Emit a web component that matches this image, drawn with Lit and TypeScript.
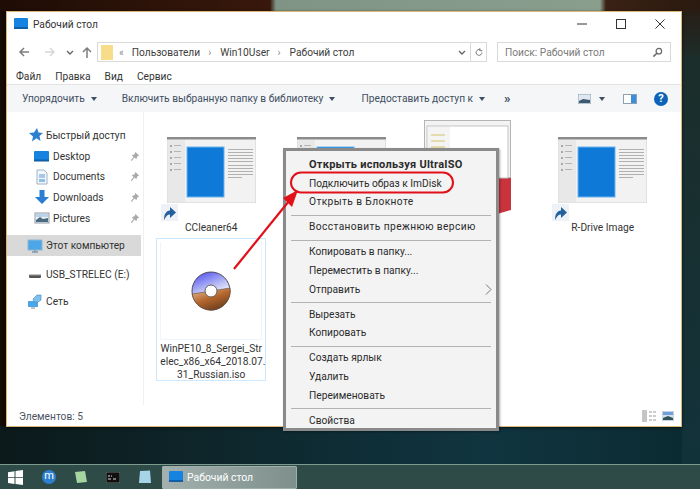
import { LitElement, html, svg, css } from 'lit';
import { customElement } from 'lit/decorators.js';

const chevron = svg`<path d="M1 1l3 3 3-3" fill="none" stroke="#666" stroke-width="1.4"/>`;

const navIcons = {
  star: svg`<path d="M10 1l1.500 4.500 4.500.4-3.500 3 1 5L9.500 11.300 5 14.500l1-5L2 6l5-.4z" fill="#2f7fd0"/>`,
  desktop: svg`<rect x="0" y="3" width="15" height="10" rx="1" fill="#1683e0"/><rect x="0" y="11.500" width="15" height="2" fill="#0f5fa8"/>`,
  docs: svg`<path d="M3 1h7l3 3v11H3z" fill="#f4f7fa" stroke="#9fb2c4"/><path d="M5 6h6M5 8h6" stroke="#5b9bd5"/><rect x="5" y="10" width="6" height="3" fill="#8fc0e8"/>`,
  down: svg`<path d="M5.500 1h5v7h4.500L8 15 1 8h4.500z" fill="#2b7cd3"/>`,
  pics: svg`<rect x="1" y="3" width="14" height="10" fill="#eef2f6" stroke="#8d9aa6"/><path d="M2 10l4-3 3 2 5-1v4H2z" fill="#4a6a80"/><rect x="2" y="4" width="12" height="3" fill="#b9d3ea"/>`,
  pc: svg`<rect x="1" y="2" width="14" height="10" fill="#4ca6e8" stroke="#8fb5cf"/><path d="M5 14h6M8 12v2" stroke="#7d99ad" stroke-width="1.500"/>`,
  usb: svg`<rect x="2" y="8" width="12" height="4" rx="1" fill="#555"/><rect x="2" y="8" width="12" height="1.300" fill="#c4c4c4"/>`,
  net: svg`<rect x="1" y="8" width="10" height="6" fill="#4ca6e8"/><path d="M6 6l4-4h4v5l-3 2H7z" fill="#7fc0ee" stroke="#3d87c0" stroke-width=".6"/><path d="M4 15h4" stroke="#888"/>`,
};

const navRows = [
  { icon: navIcons.star, label: 'Быстрый доступ', indent: 20 },
  { icon: navIcons.desktop, label: 'Desktop', indent: 27, pin: true },
  { icon: navIcons.docs, label: 'Documents', indent: 27, pin: true },
  { icon: navIcons.down, label: 'Downloads', indent: 27, pin: true },
  { icon: navIcons.pics, label: 'Pictures', indent: 27, pin: true },
  { icon: navIcons.pc, label: 'Этот компьютер', indent: 20, selected: true, gap: 7 },
  { icon: navIcons.usb, label: 'USB_STRELEC (E:)', indent: 20, gap: 8 },
  { icon: navIcons.net, label: 'Сеть', indent: 20, gap: 6 },
];

const menuGroups = [
  ['Открыть используя UltraISO', 'Подключить образ к ImDisk', 'Открыть в Блокноте'],
  ['Восстановить прежнюю версию'],
  ['Копировать в папку...', 'Переместить в папку...', 'Отправить'],
  ['Вырезать', 'Копировать'],
  ['Создать ярлык', 'Удалить', 'Переименовать'],
  ['Свойства'],
];

// these two lines run wider than the rest of the menu in the source
const wideItems = ['Открыть в Блокноте', 'Восстановить прежнюю версию'];

const thumb = svg`
  <rect width="89" height="66" fill="#f2f2f2" stroke="#d0d0d0"/>
  <rect width="89" height="2.500" fill="#8b8b8b"/>
  <rect x="1" y="3" width="17" height="62" fill="#e8e8e8"/>
  ${[8, 14, 20, 26, 32].map(y => svg`<rect x="3" y="${y}" width="2" height="2" fill="#a8a8a8"/><rect x="7" y="${y}" width="7" height="1" fill="#b5b5b5"/>`)}
  <rect x="20" y="10" width="37" height="50" fill="#0f79d8" stroke="#6db4ee"/>
  ${[12, 15, 18, 21, 24, 28, 31, 34, 37, 40].map((y, i) => svg`<rect x="61" y="${y}" width="${i === 9 ? 14 : 25}" height="1" fill="#b0b0b0"/>`)}
`;

const book = svg`
  <path d="M60 56h27v34l-14 4H60z" fill="#c8333c"/>
  <rect x=".5" y=".5" width="86" height="57" fill="#f3f3f3" stroke="#b5b5b5"/>
  <rect x="3" y="6" width="81" height="52" fill="#fff" stroke="#c4c4c4"/>
  <rect x="4" y="7" width="22" height="50" fill="#f4f4f4"/>
  ${[14, 20, 26, 32, 38].map(y => svg`<rect x="7" y="${y}" width="14" height="2" fill="#e3dcae"/>`)}
`;

const shortcut = svg`
  <rect width="17" height="17" fill="#eef1f5"/>
  <path d="M3 16c0-6 2-9 6-9.500V3l6 5.500-6 5.500v-3.500c-3 0-4 2-6 5.500z" fill="#245f9e"/>
`;

const disc = svg`
  <defs>
    <linearGradient id="top" x1="0.300" y1="0" x2="0.700" y2="1"><stop offset="0" stop-color="#5a5af0"/><stop offset=".4" stop-color="#b8bdf5"/><stop offset=".7" stop-color="#fff"/></linearGradient>
    <linearGradient id="bot" x1="0" y1="0" x2="0.600" y2="1"><stop offset="0" stop-color="#eec39a"/><stop offset=".55" stop-color="#b4672d"/><stop offset="1" stop-color="#71401f"/></linearGradient>
  </defs>
  <circle cx="20" cy="20" r="19" fill="url(#top)" stroke="#4d4a58"/>
  <path d="M1.200 23A19 19 0 0 0 39 17Z" fill="url(#bot)" stroke="#5e4a3c" stroke-width=".6"/>
  <circle cx="20" cy="20" r="6" fill="#fff" stroke="#66605a"/>
`;

const pin = svg`<path d="M7 1l4 4-2 1-1 3-2-2-3 4-1-1 3-3.500-2-2 3-1z" fill="#aaa"/>`;

@customElement('app-root')
export class AppRoot extends LitElement {
  private navRow(r: any) {
    return html`
      <div class="nav-row ${r.selected ? 'selected' : ''}" style="padding-left:${r.indent}px;margin-top:${r.gap ?? 0}px">
        <svg class="ico" viewBox="0 0 16 16" width="16" height="16">${r.icon}</svg>
        <span>${r.label}</span>
        ${r.pin ? html`<svg class="pin" viewBox="0 0 12 12" width="11" height="11">${pin}</svg>` : ''}
      </div>`;
  }

  private fileCell(label: string) {
    return html`
      <div class="cell">
        <div class="thumb">
          <svg viewBox="0 0 89 66" width="89" height="66">${thumb}</svg>
          <svg class="shortcut" viewBox="0 0 17 17" width="17" height="17">${shortcut}</svg>
        </div>
        <div class="label">${label}</div>
      </div>`;
  }

  render() {
    return html`
      <div class="window">
        <div class="title">
          <svg viewBox="0 0 14 12" width="14" height="12">
            <rect width="14" height="11" rx="1" fill="#1683e0"/><rect y="9" width="14" height="2" fill="#0f5fa8"/>
          </svg>
          <span class="title-text">Рабочий стол</span>
          <div class="controls">
            <svg viewBox="0 0 10 10" width="10" height="10"><path d="M0 5h10" stroke="#333"/></svg>
            <svg viewBox="0 0 10 10" width="10" height="10"><rect x=".5" y=".5" width="9" height="9" fill="none" stroke="#333"/></svg>
            <svg viewBox="0 0 10 10" width="10" height="10"><path d="M.5.500l9 9M9.500.500l-9 9" stroke="#333"/></svg>
          </div>
        </div>

        <div class="nav">
          <svg class="back" viewBox="0 0 12 12" width="12" height="12"><path d="M11 6H2M6 2L2 6l4 4" fill="none" stroke="#7d7d7d" stroke-width="1.500"/></svg>
          <svg class="fwd" viewBox="0 0 12 12" width="12" height="12"><path d="M1 6h9M6 2l4 4-4 4" fill="none" stroke="#d8d8d8" stroke-width="1.500"/></svg>
          <svg class="recent" viewBox="0 0 8 5" width="8" height="5">${chevron}</svg>
          <svg class="up" viewBox="0 0 12 12" width="12" height="12"><path d="M6 12V2M2 6l4-4 4 4" fill="none" stroke="#7d7d7d" stroke-width="1.500"/></svg>
          <div class="address">
            <svg class="folder" viewBox="0 0 12 15" width="12" height="15"><rect width="12" height="15" fill="#f8dc8a"/></svg>
            <span class="crumb-sep first">«</span>
            <span>Пользователи</span><span class="crumb-sep">›</span>
            <span>Win10User</span><span class="crumb-sep">›</span>
            <span>Рабочий стол</span>
            <svg class="addr-chev" viewBox="0 0 8 5" width="8" height="5">${chevron}</svg>
            <div class="refresh">
              <svg viewBox="0 0 12 12" width="10" height="11"><path d="M9.500 6a3.500 3.500 0 1 1-2-3.200M7 .800v3h3" fill="none" stroke="#777" stroke-width="1.200"/></svg>
            </div>
          </div>
          <div class="search">
            <span>Поиск: Рабочий стол</span>
            <svg viewBox="0 0 12 12" width="11" height="11"><circle cx="7.500" cy="4.500" r="3" fill="none" stroke="#666" stroke-width="1.300"/><path d="M5 7l-3.500 3.500" stroke="#666" stroke-width="1.600"/></svg>
          </div>
        </div>

        <div class="menubar"><span>Файл</span><span>Правка</span><span>Вид</span><span>Сервис</span></div>

        <div class="toolbar">
          <span class="tb a">Упорядочить<i class="caret"></i></span>
          <span class="tb b">Включить выбранную папку в библиотеку<i class="caret"></i></span>
          <span class="tb c">Предоставить доступ к<i class="caret"></i></span>
          <span class="more">»</span>
          <svg class="view" viewBox="0 0 13 10" width="13" height="10"><rect width="13" height="10" fill="#dfe8f0" stroke="#8ba0b3"/><path d="M1 7l4-2 7 1v3H1z" fill="#3f5a6e"/></svg>
          <i class="caret dark"></i>
          <svg class="pane" viewBox="0 0 14 10" width="14" height="10"><rect x=".5" y=".5" width="13" height="9" fill="#fff" stroke="#8ba0b3"/><rect x="8" y="1" width="5" height="8" fill="#3d8ed8"/></svg>
          <span class="help">?</span>
        </div>

        <div class="body">
          <div class="sidebar">${navRows.map(r => this.navRow(r))}</div>
          <div class="files">
            ${this.fileCell('CCleaner64')}
            ${this.fileCell('')}
            <div class="cell raised">
              <div class="thumb"><svg class="book" viewBox="0 0 87 94" width="87" height="94">${book}</svg></div>
            </div>
            ${this.fileCell('R-Drive Image')}
            <div class="iso">
              <div class="iso-pic"><svg viewBox="0 0 40 40" width="40" height="40">${disc}</svg></div>
              <div class="iso-name">WinPE10_8_Sergei_Str<br>elec_x86_x64_2018.07.<br>31_Russian.iso</div>
            </div>
          </div>
        </div>

        <div class="status">
          <span>Элементов: 5</span>
          <svg class="st-list" viewBox="0 0 14 12" width="14" height="12"><rect width="5" height="12" fill="#c5c5c5"/><path d="M7 2h3M11 2h3M7 6h3M11 6h3M7 10h3M11 10h3" stroke="#999"/></svg>
          <svg viewBox="0 0 12 10" width="12" height="10"><rect width="12" height="10" fill="#d5dfea" stroke="#a8b6c4" stroke-width=".6"/><rect x="1" y="1" width="10" height="3" fill="#6f9fd8"/><path d="M1 7l5-2 5 2v2H1z" fill="#2e5358"/></svg>
        </div>
      </div>

      <div class="taskbar">
        <svg class="win" viewBox="0 0 15 15" width="15" height="15"><path d="M0 2.200l6.500-1v6H0zM7.500 1l7.500-1v7.200H7.500zM0 8h6.500v6L0 13zM7.500 8H15v7l-7.500-1z" fill="#fff"/></svg>
        <span class="tb-ico m">m</span>
        <svg class="tb-ico" viewBox="0 0 14 14" width="14" height="14"><path d="M1 2l10-1 2 11-10 1z" fill="#a5d6a0"/></svg>
        <svg class="tb-ico" viewBox="0 0 14 11" width="14" height="11"><rect width="14" height="11" fill="#111" stroke="#aaa" stroke-width=".6"/><path d="M2 4h2M5 4h1M7 7h3M2 7h3" stroke="#ddd"/></svg>
        <svg class="tb-ico" viewBox="0 0 14 14" width="14" height="14"><path d="M2 1l10-.5L13 13H1z" fill="#a8d4ea"/></svg>
        <div class="task">
          <svg viewBox="0 0 14 12" width="14" height="12"><rect width="14" height="11" rx="1" fill="#1683e0"/><rect y="9" width="14" height="2" fill="#0f5fa8"/></svg>
          <span>Рабочий стол</span>
        </div>
      </div>

      <div class="ctx">
        ${menuGroups.map((g, gi) => html`
          ${gi ? html`<div class="sep"></div>` : ''}
          ${g.map(item => html`
            <div class="item ${item.includes('UltraISO') ? 'bold' : ''} ${wideItems.includes(item) ? 'wide' : ''}">
              ${item}
              ${item === 'Отправить' ? html`<svg viewBox="0 0 7 11" width="7" height="11"><path d="M1 .500l5 5-5 5" fill="none" stroke="#777"/></svg>` : ''}
            </div>`)}
        `)}
      </div>

      <svg class="overlay" viewBox="0 0 700 489" width="700" height="489">
        <rect x="291" y="172.500" width="162" height="20" rx="10" fill="none" stroke="#e0111b" stroke-width="2"/>
        <path d="M234 269L289 201" stroke="#e0111b" stroke-width="2.200"/>
        <path d="M298 190L283 198 292 207z" fill="#e0111b"/>
      </svg>
    `;
  }

  static styles = css`
    :host {
      display: flex;
      flex-direction: column;
      position: relative;
      width: 700px;
      height: 489px;
      overflow: hidden;
      font-family: Roboto, 'Noto Sans', sans-serif;
      font-size: 10.200px;
      color: #333;
      background:
        linear-gradient(90deg, #1e0c05 0, #38180b 270px, #7f9484 276px, #8a9e8e 600px, #3b2114 606px, #2a1a10 100%) top / 100% 11px no-repeat,
        linear-gradient(#2a1a10, #1c2e2b 60px, #12323a 100%) right top / 18px 464px no-repeat,
        linear-gradient(90deg, #170b05 0, #150805 7px, transparent 8px) top / 100% 426px no-repeat,
        linear-gradient(90deg, #0c1a1b, #103540 70%, #0b2a30 100%);
    }
    .window {
      box-sizing: border-box;
      width: 676px;
      height: 416px;
      margin: 11px 0 0 6px;
      border: 1px solid #d8b777;
      background: #fff;
      display: flex;
      flex-direction: column;
      box-shadow: 0 1px 3px rgba(0, 0, 0, 0.6);
    }
    .title {
      height: 24px;
      margin-bottom: 6px;
      display: flex;
      align-items: center;
      padding-left: 7px;
      flex: none;
    }
    .title-text { margin-left: 5px; }
    .controls {
      margin-left: auto;
      display: flex;
      gap: 29px;
      margin-right: 16px;
    }
    .nav {
      height: 20px;
      display: flex;
      align-items: center;
      position: relative;
      flex: none;
    }
    .back { margin-left: 11px; }
    .fwd { margin-left: 14px; }
    .recent { margin-left: 10px; }
    .up { margin-left: 7px; }
    .address {
      box-sizing: border-box;
      width: 390px;
      height: 20px;
      margin-left: 4px;
      border: 1px solid #d9d9d9;
      display: flex;
      align-items: center;
      padding-left: 3px;
      color: #3c3c3c;
      white-space: nowrap;
    }
    .crumb-sep {
      margin: 0 9px 0 8px;
      color: #888;
    }
    .crumb-sep.first { margin: 0 8px 0 6px; }
    .addr-chev { margin-left: auto; margin-right: 4px; }
    .refresh {
      height: 18px;
      width: 14px;
      border-left: 1px solid #d9d9d9;
      display: flex;
      align-items: center;
      justify-content: center;
      padding-left: 1px;
    }
    .search {
      box-sizing: border-box;
      width: 174px;
      height: 20px;
      margin-left: 10px;
      border: 1px solid #d9d9d9;
      display: flex;
      align-items: center;
      justify-content: space-between;
      padding: 0 7px;
      color: #7a7a7a;
    }
    .menubar {
      height: 16px;
      margin-top: 6px;
      display: flex;
      align-items: center;
      gap: 14px;
      padding-left: 9px;
      flex: none;
    }
    .toolbar {
      box-sizing: border-box;
      height: 28px;
      flex: none;
      border-top: 1px solid #e3e3e3;
      background: #f5f6f7;
      display: flex;
      align-items: center;
      color: #3f4f63;
      white-space: nowrap;
    }
    .tb { display: inline-flex; align-items: center; }
    .tb.a { margin-left: 15px; }
    .tb.b { margin-left: 25px; }
    .tb.c { margin-left: 26px; }
    .caret {
      display: inline-block;
      width: 0;
      height: 0;
      margin-left: 6px;
      border: 3.500px solid transparent;
      border-top: 4px solid #3f4f63;
      border-bottom: 0;
    }
    .caret.dark { margin-left: 8px; }
    .more { margin-left: 19px; font-size: 13px; font-weight: 700; }
    .view { margin-left: auto; }
    .pane { margin-left: 18px; }
    .help {
      margin-left: 17px;
      margin-right: 13px;
      width: 14px;
      height: 14px;
      border-radius: 50%;
      background: #0d63b8;
      color: #fff;
      font-weight: 700;
      font-size: 11px;
      line-height: 14px;
      text-align: center;
    }
    .body {
      flex: 1;
      display: flex;
      min-height: 0;
    }
    .sidebar {
      box-sizing: border-box;
      width: 137px;
      flex: none;
      border-right: 1px solid #f0f0f0;
      padding-top: 13px;
    }
    .nav-row {
      display: flex;
      align-items: center;
      height: 20.700px;
      position: relative;
      gap: 3px;
      width: 134px;
      box-sizing: border-box;
    }
    .nav-row.selected { background: #d9d9d9; }
    .ico { flex: none; }
    .pin { position: absolute; left: 122px; top: 5px; }
    .files {
      flex: 1;
      display: grid;
      grid-template-columns: repeat(4, 130.500px);
      grid-template-rows: 118px auto;
      padding: 8px 0 0 2px;
      align-content: start;
    }
    .cell {
      display: flex;
      flex-direction: column;
      align-items: center;
      padding-top: 17px;
    }
    .cell.raised { padding-top: 0; }
    .thumb { position: relative; height: 66px; }
    .thumb svg { display: block; }
    .shortcut { position: absolute; left: -6px; top: 67px; }
    .label { margin-top: 18px; line-height: 14px; }
    .book { margin-left: -9px; }
    .iso {
      grid-column: 1;
      justify-self: center;
      box-sizing: border-box;
      width: 110px;
      height: 143px;
      border: 1px solid #cce8ff;
      padding: 3px;
      display: flex;
      flex-direction: column;
    }
    .iso-pic {
      box-sizing: border-box;
      height: 98px;
      flex: none;
      border: 1px solid #eef5fb;
      border-top: 0;
      display: flex;
      align-items: center;
      justify-content: center;
    }
    .iso-name {
      margin-top: 2px;
      text-align: center;
      line-height: 13px;
      white-space: nowrap;
    }
    .status {
      height: 20px;
      margin-top: 1px;
      flex: none;
      display: flex;
      align-items: center;
      padding: 0 7px 0 12px;
      color: #4b5563;
    }
    .st-list { margin-left: auto; margin-right: 6px; }
    .taskbar {
      box-sizing: border-box;
      margin-top: auto;
      height: 25px;
      flex: none;
      display: flex;
      align-items: center;
      border-top: 1px solid #7d9a8f;
      background: #2e4b47;
    }
    .win { margin-left: 8px; }
    .tb-ico { flex: none; margin-left: 18px; }
    .tb-ico.m {
      margin-left: 19px;
      width: 14px;
      height: 14px;
      border-radius: 50%;
      background: #2d7fd0;
      color: #fff;
      text-align: center;
      font-size: 11px;
      line-height: 12px;
    }
    .task {
      box-sizing: border-box;
      width: 135px;
      height: 23px;
      margin-left: 10px;
      background: linear-gradient(90deg, #a3b0ad, #7e908c);
      border: 1px solid #9fb0ac;
      border-radius: 1px;
      display: flex;
      align-items: center;
      gap: 4px;
      padding-left: 6px;
      color: #fff;
      font-size: 10.400px;
    }
    .ctx {
      position: absolute;
      left: 283px;
      top: 148px;
      box-sizing: border-box;
      width: 216px;
      height: 283px;
      border: 3px solid #8a8a8a;
      background: #f3f3f3;
      padding: 4px 0 2px;
      color: #2b2b2b;
      box-shadow: 1px 1px 2px rgba(0, 0, 0, 0.35);
    }
    .item {
      height: 18.700px;
      display: flex;
      align-items: center;
      justify-content: space-between;
      padding: 0 4px 0 23px;
    }
    .item.bold { font-weight: 700; font-size: 11px; letter-spacing: 0.25px; }
    .item.wide { letter-spacing: 0.4px; }
    .sep {
      height: 1px;
      background: #b3b3b3;
      margin: 3.600px 5px 1.700px;
    }
    .overlay {
      position: absolute;
      left: 0;
      top: 0;
      pointer-events: none;
    }
  `;
}
